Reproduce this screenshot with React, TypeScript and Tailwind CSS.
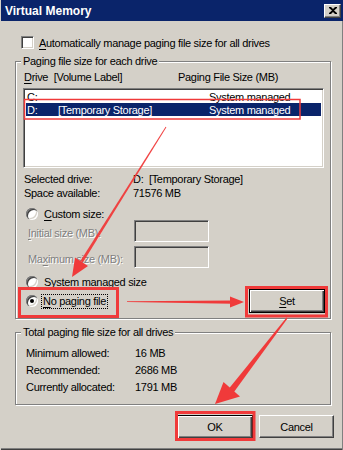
import React from "react";

const RED = "#F03A3A";

// sunken field (list, text box, checkbox)
const sunken =
  "border border-t-[#808080] border-l-[#808080] border-r-white border-b-white shadow-[inset_1px_1px_0_#404040,inset_-1px_-1px_0_#D4D0C8]";

// etched frame of a group box
const etched = "border border-[#808080] shadow-[inset_1px_1px_0_#fff,1px_1px_0_#fff]";

function Key({ children }: { children: React.ReactNode }) {
  return <span className="underline underline-offset-[2px] decoration-1">{children}</span>;
}

function Radio({ checked }: { checked?: boolean }) {
  return (
    <span className="w-[12px] h-[12px] rounded-full bg-white shrink-0 flex items-center justify-center shadow-[inset_1px_1px_0_#808080,inset_2px_2px_0_#404040,inset_-1px_-1px_0_#fff,inset_-2px_-2px_0_#D4D0C8]">
      {checked && <span className="w-[4px] h-[4px] rounded-full bg-black" />}
    </span>
  );
}

function Button({ children, def }: { children: React.ReactNode; def?: boolean }) {
  return (
    <button
      type="button"
      className={
        def
          ? "w-[76px] h-[24px] bg-[#D4D0C8] border border-black shadow-[inset_1px_1px_0_#fff,inset_-1px_-1px_0_#404040,inset_-2px_-2px_0_#808080] text-[11px] flex items-center justify-center"
          : "w-[75px] h-[23px] bg-[#D4D0C8] border border-t-white border-l-white border-r-[#404040] border-b-[#404040] shadow-[inset_-1px_-1px_0_#808080] text-[11px] flex items-center justify-center"
      }
    >
      {children}
    </button>
  );
}

function GroupBox({ label, className, children }: { label: string; className: string; children: React.ReactNode }) {
  return (
    <div className={`relative w-[316px] ${etched} ${className}`}>
      <span className="absolute -top-[7px] left-[5px] px-[2px] bg-[#D4D0C8] leading-[12px]">{label}</span>
      {children}
    </div>
  );
}

function Annotations() {
  return (
    <svg className="absolute inset-0 pointer-events-none" width="343" height="450" viewBox="0 0 343 450">
      {/* boxes */}
      <rect x="23.5" y="99.5" width="275.5" height="19.5" fill="none" stroke={RED} strokeWidth="1.5" />
      <rect x="18.5" y="288.5" width="98" height="28" fill="none" stroke={RED} strokeWidth="3" />
      <rect x="245.5" y="287.5" width="80" height="28.5" fill="none" stroke={RED} strokeWidth="3" />
      <rect x="175.5" y="412.5" width="77.5" height="27" fill="none" stroke={RED} strokeWidth="3" />
      {/* arrow: list row -> system managed / no paging file */}
      <polygon points="165.4,127.3 164.6,126.7 79.3,261.0 81.9,262.6" fill={RED} opacity="0.95" />
      <polygon points="87,266 71,277 74,257.5" fill={RED} />
      {/* arrow: no paging file -> Set */}
      <polygon points="126,301.2 126,302 231,303.8 231,300.4" fill={RED} />
      <polygon points="229,296.5 243,302 229,307.5" fill={RED} />
      {/* arrow: Set -> OK */}
      <polygon points="286.5,318.4 285.5,317.6 228.0,388.6 232.6,392.4" fill={RED} />
      <polygon points="239,396.5 214,404 222.5,382" fill={RED} />
    </svg>
  );
}

export default function App() {
  return (
    <div className="relative w-[343px] h-[450px] overflow-hidden bg-[#D4D0C8] font-['Liberation_Sans',Arial,sans-serif] text-[11px] leading-[12px] tracking-[-0.3px] text-black border-l border-l-[#D4D0C8]">
      {/* Title bar */}
      <div className="h-[21px] bg-[#0A246A] flex items-center justify-between pl-[4px] pr-[2px]">
        <span className="text-white font-bold text-[12px] leading-[14px] tracking-normal">Virtual Memory</span>
        <span className="w-[17px] h-[14px] bg-[#D4D0C8] border border-t-white border-l-white border-r-[#404040] border-b-[#404040] shadow-[inset_-1px_-1px_0_#808080] flex items-center justify-center">
          <svg width="8" height="7" viewBox="0 0 8 7">
            <path d="M0 0h2l2 2 2-2h2v1L5 3.5 8 6v1H6L4 5 2 7H0V6l3-2.5L0 1z" fill="#000" />
          </svg>
        </span>
      </div>

      {/* Body */}
      <div className="pl-[14px] pr-[9px]">
        {/* Auto manage checkbox */}
        <div className="mt-[15px] h-[13px] flex items-center gap-[5px] pl-[6px]">
          <span className={`w-[13px] h-[13px] bg-white shrink-0 ${sunken}`} />
          <span>
            <Key>A</Key>utomatically manage paging file size for all drives
          </span>
        </div>

        {/* Paging file size for each drive */}
        <GroupBox label="Paging file size for each drive" className="mt-[12px] h-[258px]">
          <div className="pl-[8px] pr-[5px]">
            <div className="mt-[9px] h-[12px] flex">
              <span className="w-[154px] whitespace-pre">
                <Key>D</Key>rive  [Volume Label]
              </span>
              <span>Paging File Size (MB)</span>
            </div>

            <div className={`mt-[5px] -ml-[1px] w-[301px] h-[80px] bg-white p-[2px] ${sunken}`}>
              <div className="h-[12px] flex items-center pl-[1px]">
                <span className="w-[182px]">C:</span>
                <span>System managed</span>
              </div>
              <div className="h-[13px] flex items-center pl-[1px] bg-[#0A246A] text-white">
                <span className="w-[31px]">D:</span>
                <span className="w-[151px]">[Temporary Storage]</span>
                <span>System managed</span>
              </div>
            </div>

            <div className="mt-[4px] leading-[14px]">
              <div className="flex">
                <span className="w-[109px]">Selected drive:</span>
                <span className="whitespace-pre">D:  [Temporary Storage]</span>
              </div>
              <div className="flex">
                <span className="w-[109px]">Space available:</span>
                <span>71576 MB</span>
              </div>
            </div>

            <div className="mt-[7px] h-[13px] flex items-center gap-[6px] pl-[2px]">
              <Radio />
              <span>
                <Key>C</Key>ustom size:
              </span>
            </div>

            <div className="flex items-center h-[22px] pl-[4px]">
              <span className="w-[106px] pt-[3px] text-[#808080] [text-shadow:1px_1px_0_#fff]">
                <Key>I</Key>nitial size (MB):
              </span>
              <span className={`w-[75px] h-[22px] bg-[#D4D0C8] ${sunken}`} />
            </div>
            <div className="mt-[4px] flex items-center h-[22px] pl-[4px]">
              <span className="w-[106px] pt-[3px] text-[#808080] [text-shadow:1px_1px_0_#fff]">
                Ma<Key>x</Key>imum size (MB):
              </span>
              <span className={`w-[75px] h-[22px] bg-[#D4D0C8] ${sunken}`} />
            </div>

            <div className="mt-[8px] h-[12px] flex items-center gap-[6px] pl-[2px]">
              <Radio />
              <span>
                S<Key>y</Key>stem managed size
              </span>
            </div>

            <div className="mt-[1px] h-[24px] flex items-center justify-between pl-[2px]">
              <div className="flex items-center gap-[4px]">
                <Radio checked />
                <span className="px-[1px] outline outline-1 outline-dotted outline-black leading-[13px]">
                  <Key>N</Key>o paging file
                </span>
              </div>
              <Button def>
                <Key>S</Key>et
              </Button>
            </div>
          </div>
        </GroupBox>

        {/* Total paging file size */}
        <GroupBox label="Total paging file size for all drives" className="mt-[13px] h-[73px]">
          <div className="mt-[12px] pl-[10px] leading-[17px]">
            <div className="flex">
              <span className="w-[109px]">Minimum allowed:</span>
              <span>16 MB</span>
            </div>
            <div className="flex">
              <span className="w-[109px]">Recommended:</span>
              <span>2686 MB</span>
            </div>
            <div className="flex">
              <span className="w-[109px]">Currently allocated:</span>
              <span>1791 MB</span>
            </div>
          </div>
        </GroupBox>

        {/* Dialog buttons */}
        <div className="mt-[10px] flex justify-end gap-[6px]">
          <Button def>OK</Button>
          <Button>Cancel</Button>
        </div>
      </div>

      {/* window frame bottom/right */}
      <div className="absolute left-0 right-0 bottom-0 h-[2px] border-t border-t-[#808080] bg-[#404040]" />
      <div className="absolute top-[21px] bottom-0 right-0 w-[1px] bg-[#808080]" />

      <Annotations />
    </div>
  );
}
